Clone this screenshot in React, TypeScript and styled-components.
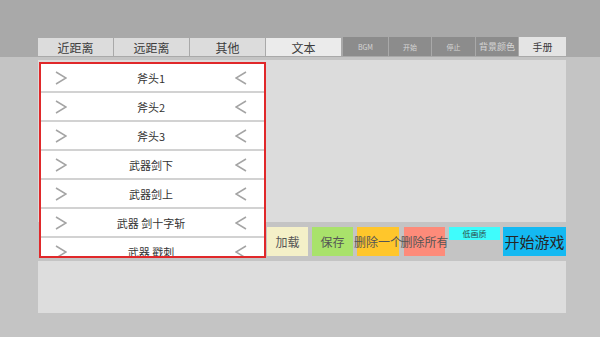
import styled, { createGlobalStyle } from 'styled-components';

const GlobalStyle = createGlobalStyle`
  html, body {
    margin: 0;
    padding: 0;
    background: #c4c4c4;
  }
  * {
    box-sizing: border-box;
  }
`;

const Page = styled.div`
  width: 600px;
  height: 337px;
  overflow: hidden;
  background: #c4c4c4;
  font-family: 'Noto Sans CJK SC', 'Noto Sans', sans-serif;
`;

const TopBand = styled.div`
  height: 57px;
  background: #a9a9a9;
  display: flex;
  align-items: flex-end;
  padding: 0 0 1px 38px;
`;

const TabGroup = styled.div`
  display: flex;
  gap: 1px;
  height: 18px;
`;

const Tab = styled.div<{ $active?: boolean }>`
  width: 75px;
  display: flex;
  align-items: center;
  justify-content: center;
  background: ${({ $active }) => ($active ? '#ebebeb' : '#dcdcdc')};
  color: #3c3c3c;
  font-size: 12px;
`;

const ToolGroup = styled.div`
  display: flex;
  gap: 1px;
  height: 19px;
  margin-left: 2px;
`;

const ToolButton = styled.div<{ $w: number; $size?: number; $light?: boolean }>`
  width: ${({ $w }) => $w}px;
  display: flex;
  align-items: center;
  justify-content: center;
  background: ${({ $light }) => ($light ? '#e4e4e4' : '#8c8c8c')};
  color: ${({ $light }) => ($light ? '#3c3c3c' : '#d6d6d6')};
  font-size: ${({ $size }) => $size ?? 7}px;
  white-space: nowrap;
`;

const Workspace = styled.div`
  margin: 3px 0 0 38px;
  width: 528px;
  display: grid;
  grid-template-columns: 229px 1fr;
  grid-template-rows: 162px 39px 52px;
`;

const UpperPanel = styled.div`
  grid-column: 1 / 3;
  grid-row: 1;
  background: #dcdcdc;
`;

const LowerPanel = styled.div`
  grid-column: 1 / 3;
  grid-row: 3;
  background: #dddddd;
`;

const List = styled.div`
  grid-column: 1;
  grid-row: 1 / 3;
  align-self: start;
  z-index: 1;
  margin: 2px 0 0 1px;
  width: 227px;
  height: 196px;
  border: 2px solid #e0282a;
  background: #d2d2d2;
  overflow: hidden;
  display: flex;
  flex-direction: column;
  gap: 2px;
`;

const Row = styled.div`
  flex: 0 0 27px;
  background: #ffffff;
  display: flex;
  align-items: center;
  justify-content: space-between;
  padding: 0 17px 0 14px;
  color: #333333;
  font-size: 11px;
`;

const Chevron = styled.svg`
  width: 12px;
  height: 14px;
  flex: none;
`;

const ButtonBar = styled.div`
  grid-column: 2;
  grid-row: 2;
  display: flex;
  align-items: flex-start;
  padding-top: 5px;
`;

const ActionButton = styled.div<{ $bg: string; $w: number; $gap: number }>`
  width: ${({ $w }) => $w}px;
  height: 29px;
  margin-right: ${({ $gap }) => $gap}px;
  background: ${({ $bg }) => $bg};
  display: flex;
  align-items: center;
  justify-content: center;
  color: #555555;
  font-size: 12px;
  white-space: nowrap;
`;

const QualityToggle = styled.div`
  width: 51px;
  height: 13px;
  margin-right: 3px;
  background: #3ffcfc;
  display: flex;
  align-items: center;
  justify-content: center;
  color: #2a4a4a;
  font-size: 8px;
`;

const StartButton = styled.div`
  width: 63px;
  height: 29px;
  background: #14b9f2;
  display: flex;
  align-items: center;
  justify-content: center;
  color: #262626;
  font-size: 15px;
  white-space: nowrap;
`;

const items = ['斧头1', '斧头2', '斧头3', '武器剑下', '武器剑上', '武器 剑十字斩', '武器 戳刺'];

const Right = () => (
  <Chevron viewBox="0 0 12 14">
    <polyline points="1,1 11,7 1,13" fill="none" stroke="#a4a4a4" strokeWidth="1.5" />
  </Chevron>
);

const Left = () => (
  <Chevron viewBox="0 0 12 14">
    <polyline points="11,1 1,7 11,13" fill="none" stroke="#a4a4a4" strokeWidth="1.5" />
  </Chevron>
);

const App = () => (
  <Page>
    <GlobalStyle />
    <TopBand>
      <TabGroup>
        <Tab>近距离</Tab>
        <Tab>远距离</Tab>
        <Tab>其他</Tab>
        <Tab $active>文本</Tab>
      </TabGroup>
      <ToolGroup>
        <ToolButton $w={45}>BGM</ToolButton>
        <ToolButton $w={42}>开始</ToolButton>
        <ToolButton $w={43}>停止</ToolButton>
        <ToolButton $w={42} $size={9}>背景颜色</ToolButton>
        <ToolButton $w={47} $size={10} $light>手册</ToolButton>
      </ToolGroup>
    </TopBand>
    <Workspace>
      <UpperPanel />
      <List>
        {items.map((name) => (
          <Row key={name}>
            <Right />
            <span>{name}</span>
            <Left />
          </Row>
        ))}
      </List>
      <ButtonBar>
        <ActionButton $bg="#f4f0c8" $w={41} $gap={4}>加载</ActionButton>
        <ActionButton $bg="#a9e26b" $w={41} $gap={4}>保存</ActionButton>
        <ActionButton $bg="#ffc62b" $w={42} $gap={5}>删除一个</ActionButton>
        <ActionButton $bg="#fd8b7a" $w={41} $gap={4}>删除所有</ActionButton>
        <QualityToggle>低画质</QualityToggle>
        <StartButton>开始游戏</StartButton>
      </ButtonBar>
      <LowerPanel />
    </Workspace>
  </Page>
);

export default App;
